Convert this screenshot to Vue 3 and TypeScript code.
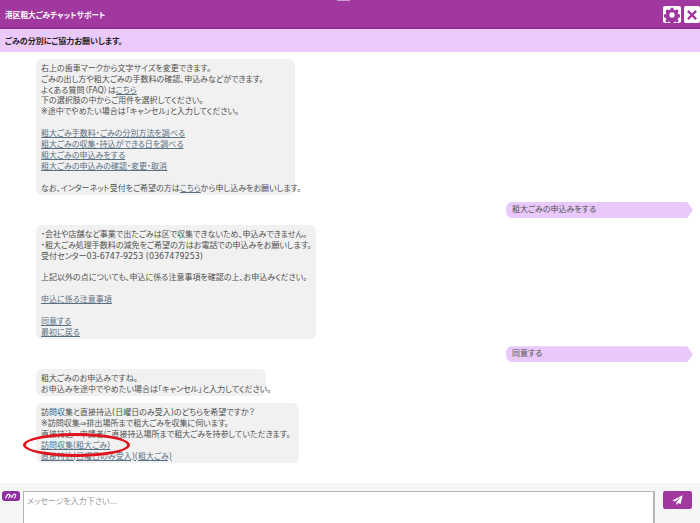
<script setup lang="ts">
interface Part { t: string; link?: boolean }
const b1: Part[][] = [
  [{ t: '右上の歯車マークから文字サイズを変更できます。' }],
  [{ t: 'ごみの出し方や粗大ごみの手数料の確認、申込みなどができます。' }],
  [{ t: 'よくある質問（FAQ）は' }, { t: 'こちら', link: true }],
  [{ t: '下の選択肢の中からご用件を選択してください。' }],
  [{ t: '※途中でやめたい場合は「キャンセル」と入力してください。' }],
  [],
  [{ t: '粗大ごみ手数料・ごみの分別方法を調べる', link: true }],
  [{ t: '粗大ごみの収集・持込ができる日を調べる', link: true }],
  [{ t: '粗大ごみの申込みをする', link: true }],
  [{ t: '粗大ごみの申込みの確認・変更・取消', link: true }],
  [],
  [{ t: 'なお、インターネット受付をご希望の方は' }, { t: 'こちら', link: true }, { t: 'から申し込みをお願いします。' }],
]
const b2: Part[][] = [
  [{ t: '・会社や店舗など事業で出たごみは区で収集できないため、申込みできません。' }],
  [{ t: '・粗大ごみ処理手数料の減免をご希望の方はお電話での申込みをお願いします。' }],
  [{ t: '受付センター03-6747-9253 (0367479253)' }],
  [],
  [{ t: '上記以外の点についても、申込に係る注意事項を確認の上、お申込みください。' }],
  [],
  [{ t: '申込に係る注意事項', link: true }],
  [],
  [{ t: '同意する', link: true }],
  [{ t: '最初に戻る', link: true }],
]
const b3: Part[][] = [
  [{ t: '粗大ごみのお申込みですね。' }],
  [{ t: 'お申込みを途中でやめたい場合は「キャンセル」と入力してください。' }],
]
const b4: Part[][] = [
  [{ t: '訪問収集と直接持込(日曜日のみ受入)のどちらを希望ですか？' }],
  [{ t: '※訪問収集⇒排出場所まで粗大ごみを収集に伺います。' }],
  [{ t: '直接持込⇒申請者に直接持込場所まで粗大ごみを持参していただきます。' }],
  [{ t: '訪問収集(粗大ごみ)', link: true }],
  [{ t: '直接持込(日曜日のみ受入)(粗大ごみ)', link: true }],
]
type Msg = { side: 'bot'; lines: Part[][]; width: number; mark?: boolean } | { side: 'me'; text: string }
const messages: Msg[] = [
  { side: 'bot', lines: b1, width: 259 },
  { side: 'me', text: '粗大ごみの申込みをする' },
  { side: 'bot', lines: b2, width: 280 },
  { side: 'me', text: '同意する' },
  { side: 'bot', lines: b3, width: 230 },
  { side: 'bot', lines: b4, width: 263, mark: true },
]
</script>

<template>
  <div class="app">
    <header class="top">
      <span class="notch"></span>
      <h1 class="title">港区粗大ごみチャットサポート</h1>
      <div class="tools">
        <button class="tool gear" aria-label="設定">
          <svg viewBox="0 0 24 24" width="16" height="16">
            <path fill="#9f369f" fill-rule="evenodd" d="M10 1h4l.6 3 2.2.9 2.6-1.7 2.8 2.8-1.7 2.6.9 2.2 3 .6v4l-3 .6-.9 2.2 1.7 2.6-2.8 2.8-2.6-1.7-2.2.9-.6 3h-4l-.6-3-2.2-.9-2.6 1.7-2.8-2.8 1.7-2.6-.9-2.2-3-.6v-4l3-.6.9-2.2L2.2 5.9 5 3.2l2.6 1.7L9.4 4zM12 8a4 4 0 1 0 0 8 4 4 0 0 0 0-8z"/>
          </svg>
        </button>
        <button class="tool close" aria-label="閉じる">
          <svg viewBox="0 0 16 16" width="12" height="12">
            <path d="M2.5 2.5l11 11M13.5 2.5l-11 11" stroke="#9f369f" stroke-width="3" fill="none"/>
          </svg>
        </button>
      </div>
    </header>
    <div class="notice">ごみの分別にご協力お願いします。</div>

    <main class="log">
      <template v-for="(m, i) in messages" :key="i">
        <div v-if="m.side === 'bot'" class="bubble" :style="{ width: m.width + 'px' }">
          <div v-for="(line, j) in m.lines" :key="j" class="line">
            <template v-for="(p, k) in line" :key="k">
              <a v-if="p.link" class="link">{{ p.t }}</a>
              <span v-else>{{ p.t }}</span>
            </template>
          </div>
          <span v-if="m.mark" class="ring"></span>
        </div>
        <div v-else class="mine">{{ m.text }}</div>
      </template>
    </main>

    <footer class="composer">
      <svg class="logo" viewBox="0 0 18 10" width="18" height="10">
        <rect width="18" height="10" rx="3" fill="#8e2f9e"/>
        <path d="M3.5 7.5Q5.5 2 7.5 3.5Q8.5 4.5 6.5 7.5M9.5 7Q11.5 2 13.5 3.5Q14.5 4.5 12 7.5M8 5h2" stroke="#fff" stroke-width="1.1" fill="none"/>
      </svg>
      <div class="input">メッセージを入力下さい...</div>
      <button class="send" aria-label="送信">
        <svg viewBox="0 0 16 16" width="11" height="11">
          <path fill="#fff" d="M15.5.5L.5 8l4 1.6L13 3 6.5 10.6V15l2.6-3.3 3.4 1.4z"/>
        </svg>
      </button>
    </footer>
  </div>
</template>

<style scoped>
.app {
  width: 700px;
  height: 523px;
  display: flex;
  flex-direction: column;
  overflow: hidden;
  background: #fff;
  font-family: "DejaVu Sans", "Noto Sans CJK JP", sans-serif;
  font-size: 8px;
  font-feature-settings: "palt";
  color: #505050;
}
.top {
  position: relative;
  height: 29px;
  box-sizing: border-box;
  flex: none;
  display: flex;
  align-items: center;
  justify-content: space-between;
  padding: 2px 0 0 5px;
  background: #a0389f;
  border-bottom: 2px solid #8f2f90;
}
.notch {
  position: absolute;
  top: 0;
  left: 337px;
  width: 13px;
  height: 1px;
  background: #c99bc8;
}
.title {
  margin: 0;
  font-size: 7.7px;
  font-weight: 700;
  color: #fff;
}
.tools {
  display: flex;
  gap: 3px;
}
.tool {
  height: 17px;
  padding: 0;
  border: 0;
  border-radius: 2px;
  background: #fff;
  display: flex;
  align-items: center;
  justify-content: center;
}
.gear {
  width: 18px;
}
.close {
  width: 16px;
}
.notice {
  height: 23px;
  flex: none;
  box-sizing: border-box;
  padding: 0 5px;
  display: flex;
  align-items: center;
  background: #ecc9fb;
  color: #222;
  font-size: 8px;
  font-weight: 700;
}
.log {
  flex: 1;
  min-height: 0;
  display: flex;
  flex-direction: column;
  align-items: flex-start;
  gap: 7px;
  padding: 7px 7px 0 36px;
}
.bubble {
  position: relative;
  box-sizing: border-box;
  padding: 4.7px 5px 0.5px;
  background: #f1f1f1;
  border-radius: 6px;
}
.line {
  min-height: 10.9px;
  line-height: 10.9px;
  white-space: nowrap;
}
.link {
  color: #5a7083;
  text-decoration: underline;
}
.ring {
  position: absolute;
  left: -13px;
  top: 30px;
  width: 107px;
  height: 24px;
  box-sizing: border-box;
  border: 3px solid #e0141e;
  border-radius: 50%;
}
.mine {
  align-self: flex-end;
  box-sizing: border-box;
  width: 187px;
  height: 16px;
  line-height: 16px;
  padding-left: 6px;
  background: #e9c9fb;
  border-radius: 6px 0 0 6px;
  clip-path: polygon(0 0, 97% 0, 100% 50%, 97% 100%, 0 100%);
}
.composer {
  height: 40px;
  flex: none;
  display: flex;
  align-items: flex-start;
  box-sizing: border-box;
  padding: 8px 8px 0 2px;
  background: #f6f6f6;
}
.logo {
  flex: none;
  margin-right: 3px;
}
.input {
  flex: 1;
  height: 40px;
  box-sizing: border-box;
  padding: 4px 3px;
  background: #fff;
  border: 1px solid #b5b5b5;
  border-width: 1px 2px 0 1px;
  color: #999;
  line-height: 11px;
}
.send {
  flex: none;
  width: 29px;
  height: 18px;
  margin-left: 8px;
  padding: 0;
  border: 0;
  border-radius: 2px;
  background: #a0389f;
  display: flex;
  align-items: center;
  justify-content: center;
}
</style>
